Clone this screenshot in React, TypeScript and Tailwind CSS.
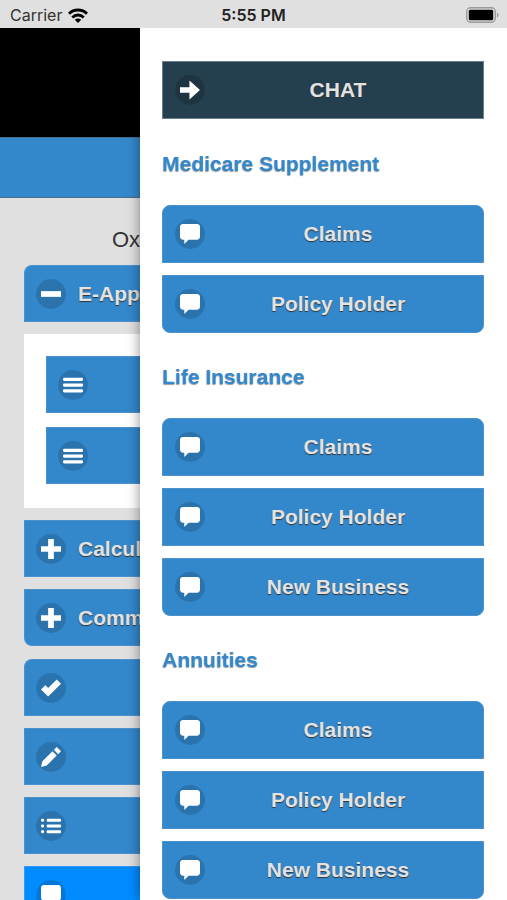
import type { ReactNode } from "react";
import { clsx } from "clsx";

type IconName = "arrow" | "comment" | "minus" | "plus" | "bars" | "check" | "edit" | "bullets";

const shapes: Record<IconName, ReactNode> = {
  arrow: <polygon points="0,5 6.6,5 6.6,0.4 14,7 6.6,13.6 6.6,9 0,9" />,
  comment: (
    <path d="M12 0H2C.9 0 0 .9 0 2v7c0 1.100.9 2 2 2h1v3l3-3h6c1.100 0 2-.9 2-2V2c0-1.100-.9-2-2-2z" />
  ),
  minus: <rect y="5" width="14" height="4" />,
  plus: <polygon points="14,5 9,5 9,0 5,0 5,5 0,5 0,9 5,9 5,14 9,14 9,9 14,9" />,
  bars: (
    <>
      <rect y="2" width="14" height="2.2" rx="0.8" />
      <rect y="6" width="14" height="2.2" rx="0.8" />
      <rect y="10" width="14" height="2.2" rx="0.8" />
    </>
  ),
  check: <polygon points="14,4 11,1 5,7 3,5 0,8 5,13" />,
  edit: <path d="M1 10l-1 4 4-1 7-7-3-3-7 7zM11 0L9 2l3 3 2-2-3-3z" />,
  bullets: (
    <>
      <rect y="2" width="2.2" height="2" rx="0.8" />
      <rect x="4" y="2" width="10" height="2" rx="0.6" />
      <rect y="6" width="2.2" height="2" rx="0.8" />
      <rect x="4" y="6" width="10" height="2" rx="0.6" />
      <rect y="10" width="2.2" height="2" rx="0.8" />
      <rect x="4" y="10" width="10" height="2" rx="0.6" />
    </>
  ),
};

function Disc({ icon }: { icon: IconName }) {
  return (
    <span className="flex size-[30px] shrink-0 items-center justify-center rounded-full bg-black/15">
      <svg viewBox="0 0 14 14" className="size-5 fill-white" aria-hidden="true">
        {shapes[icon]}
      </svg>
    </span>
  );
}

const blue = "border-[#4b92cd] bg-[#3388cc]";
const barText = "text-[21px] font-bold whitespace-nowrap text-[#e2e2e2] [text-shadow:0_1px_1px_#333]";

interface BarProps {
  icon: IconName;
  label: string;
  className?: string;
}

// full width button of the slide-in panel
function PanelButton({ icon, label, className }: BarProps) {
  return (
    <button
      type="button"
      className={clsx("flex h-[58px] w-full items-center border px-3", barText, className)}
    >
      <Disc icon={icon} />
      <span className="flex-1 text-center">{label}</span>
    </button>
  );
}

// button of the page that the panel covers
function PageButton({ icon, label, children, className }: BarProps & { children?: ReactNode }) {
  return (
    <button
      type="button"
      aria-label={label}
      className={clsx(
        "flex h-[57px] w-full items-center gap-3 border border-r-0 pl-[11px]",
        barText,
        className ?? blue,
      )}
    >
      <Disc icon={icon} />
      {children}
    </button>
  );
}

const sections = [
  { title: "Medicare Supplement", items: ["Claims", "Policy Holder"] },
  { title: "Life Insurance", items: ["Claims", "Policy Holder", "New Business"] },
  { title: "Annuities", items: ["Claims", "Policy Holder", "New Business"] },
];

function StatusBar() {
  return (
    <header className="z-20 grid h-7 shrink-0 grid-cols-3 items-center bg-[#e0e0e0] px-2 pt-0.5 font-[Inter,sans-serif] text-base text-[#333]">
      <div className="flex items-center gap-1.5 pl-0.5">
        Carrier
        <svg viewBox="0 0 20 15" className="h-[15px] w-5" fill="none" stroke="#000" aria-hidden="true">
          <path d="M1 5.800a12.800 12.800 0 0 1 18 0" strokeWidth="3" />
          <path d="M4.300 9.400a8 8 0 0 1 11.400 0" strokeWidth="2.800" />
          <path d="M10 15l-3.200-3.200a4.600 4.600 0 0 1 6.400 0z" fill="#000" stroke="none" />
        </svg>
      </div>
      <div className="text-center font-semibold text-[#222]">5:55 PM</div>
      <svg viewBox="0 0 33 16" className="h-4 w-[33px] justify-self-end" aria-hidden="true">
        <rect x="0.7" y="0.7" width="28.600" height="14.600" rx="4" fill="none" stroke="#999" strokeWidth="1.400" />
        <rect x="2.800" y="2.800" width="24.400" height="10.400" rx="1.500" fill="#000" />
        <path d="M31 5.500c2 .8 2 4.200 0 5z" fill="#999" />
      </svg>
    </header>
  );
}

export default function App() {
  return (
    <div className="flex h-screen flex-col overflow-hidden bg-[#e0e0e0] font-['Liberation_Sans',Arial,sans-serif]">
      <StatusBar />
      <div className="flex min-h-0 flex-1">
        <main className="w-[140px] shrink-0 overflow-hidden">
          <div className="h-[109px] bg-black" />
          <div className="h-[61px] border-y border-[#456e90] bg-[#3388cc]" />
          <p className="mt-7 text-right text-[22px] leading-7 text-[#333]">Ox</p>
          <div className="mt-[11px] flex flex-col gap-3 pl-6">
            <PageButton icon="minus" label="E-App" className={clsx("rounded-tl-lg", blue)}>
              E-App
            </PageButton>
            <div className="flex flex-col gap-[14px] bg-white pt-[22px] pb-6 pl-[22px]">
              <PageButton icon="bars" label="First application" />
              <PageButton icon="bars" label="Second application" />
            </div>
            <PageButton icon="plus" label="Calcul">
              Calcul
            </PageButton>
            <PageButton icon="plus" label="Comm" className={clsx("rounded-bl-lg", blue)}>
              Comm
            </PageButton>
          </div>
          <div className="mt-[13px] flex flex-col gap-3 pl-6">
            <PageButton icon="check" label="Check" className={clsx("rounded-tl-lg", blue)} />
            <PageButton icon="edit" label="Edit" />
            <PageButton icon="bullets" label="List" />
            <PageButton icon="comment" label="Chat" className="border-[#3399f5] bg-[#008cff]" />
          </div>
        </main>

        <aside className="z-10 min-w-0 flex-1 overflow-hidden bg-white pt-[33px] pr-[23px] pl-[22px] shadow-[0_0_12px_rgba(0,0,0,0.45)]">
          <PanelButton icon="arrow" label="CHAT" className="mb-px border-[#6a7f93] bg-[#243f4d]" />
          {sections.map(({ title, items }) => (
            <section key={title}>
              <h2 className="pt-[30px] pb-[27px] text-[21px] leading-7 font-bold text-[#3388cc] [text-shadow:0_1px_1px_#999]">
                {title}
              </h2>
              <div className="flex flex-col gap-3">
                {items.map((item) => (
                  <PanelButton
                    key={item}
                    icon="comment"
                    label={item}
                    className={clsx("first:rounded-t-lg last:rounded-b-lg", blue)}
                  />
                ))}
              </div>
            </section>
          ))}
        </aside>
      </div>
    </div>
  );
}
